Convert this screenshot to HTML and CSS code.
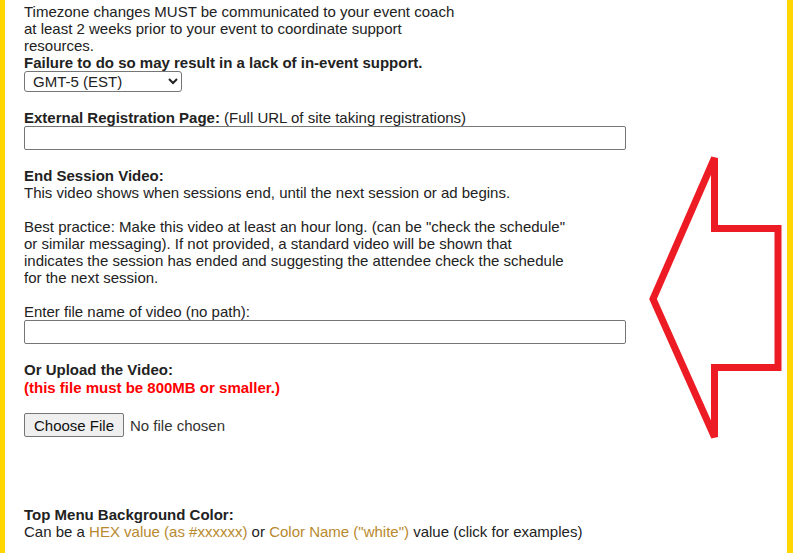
FILE: index.html
```html
<!DOCTYPE html>
<html lang="en">
<head>
  <meta charset="UTF-8" />
  <title>Event Settings</title>
  <link rel="stylesheet" href="styles.css">
</head>
<body>
  <div id="page">
    <form class="settings">
      <div class="field">
        <p class="note">Timezone changes MUST be communicated to your event coach<br>at least 2 weeks prior to your event to coordinate support<br>resources.</p>
        <p class="label">Failure to do so may result in a lack of in-event support.</p>
        <select class="tzSelect">
          <option>GMT-5 (EST)</option>
          <option>GMT-6 (CST)</option>
          <option>GMT-7 (MST)</option>
          <option>GMT-8 (PST)</option>
        </select>
      </div>

      <div class="field">
        <p><span class="label">External Registration Page:</span> (Full URL of site taking registrations)</p>
        <input type="text" class="textBox">
      </div>

      <div class="field">
        <p class="label">End Session Video:</p>
        <p class="para">This video shows when sessions end, until the next session or ad begins.</p>
        <p class="para">Best practice: Make this video at least an hour long. (can be "check the schedule"<br>or similar messaging). If not provided, a standard video will be shown that<br>indicates the session has ended and suggesting the attendee check the schedule<br>for the next session.</p>
        <p>Enter file name of video (no path):</p>
        <input type="text" class="textBox">
      </div>

      <div class="field upload">
        <p class="label">Or Upload the Video:</p>
        <p class="warn">(this file must be 800MB or smaller.)</p>
        <div class="fileRow">
          <button type="button" class="fileBtn">Choose File</button>
          <span class="fileName">No file chosen</span>
        </div>
      </div>

      <div class="field">
        <p class="label">Top Menu Background Color:</p>
        <p>Can be a <a href="#">HEX value (as #xxxxxx)</a> or <a href="#">Color Name ("white")</a> value (click for examples)</p>
      </div>
    </form>

    <svg class="arrow" width="793" height="553" viewBox="0 0 793 553">
      <polygon points="714.5,158 714.5,228.5 778,228.5 778,367.5 714.5,367.5 714.5,437 653,299" fill="none" stroke="#ed1c24" stroke-width="7" stroke-linejoin="miter" stroke-miterlimit="3"/>
    </svg>
  </div>
</body>
</html>
```

FILE: styles.css
```css
* {
  box-sizing: border-box;
}
html, body {
  margin: 0;
  height: 100%;
  background: white;
}
body {
  font-family: 'Liberation Sans', Arial, sans-serif;
  font-size: 15px;
  line-height: 17px;
  color: #222;
  overflow: hidden;
}
#page {
  position: relative;
  height: 100%;
  border-left: 5px solid #ffd700;
  border-right: 6px solid #ffd700;
  padding: 3px 0 0 19px;
}
.settings {
  display: flex;
  flex-direction: column;
  gap: 17px;
}
.field p {
  margin: 0;
}
.label {
  font-weight: bold;
}
.para {
  margin-bottom: 17px !important;
}
.tzSelect {
  display: block;
  width: 158px;
  height: 21px;
  padding: 0 0 0 4px;
  font-family: inherit;
  font-size: 15px;
  color: #222;
  background: white;
  border: 1px solid #767676;
  border-radius: 3px;
}
.textBox {
  display: block;
  width: 602px;
  height: 24px;
  font-family: inherit;
  font-size: 15px;
  border: 1px solid #767676;
  border-radius: 2px;
  background: white;
}
.upload .label {
  margin-bottom: 1px;
}
.warn {
  color: #ff0000;
  font-weight: bold;
}
.fileRow {
  display: flex;
  align-items: center;
  gap: 6px;
  margin-top: 17px;
}
.fileBtn {
  height: 24px;
  width: 100px;
  padding: 0;
  font-family: inherit;
  font-size: 15px;
  color: #111;
  background: #efefef;
  border: 1px solid #767676;
  border-radius: 2px;
}
.fileName {
  color: #333;
}
.upload {
  margin-bottom: 52px;
}
a {
  color: #b8892e;
  text-decoration: none;
}
.arrow {
  position: absolute;
  top: 0;
  left: -5px;
  pointer-events: none;
}
```
